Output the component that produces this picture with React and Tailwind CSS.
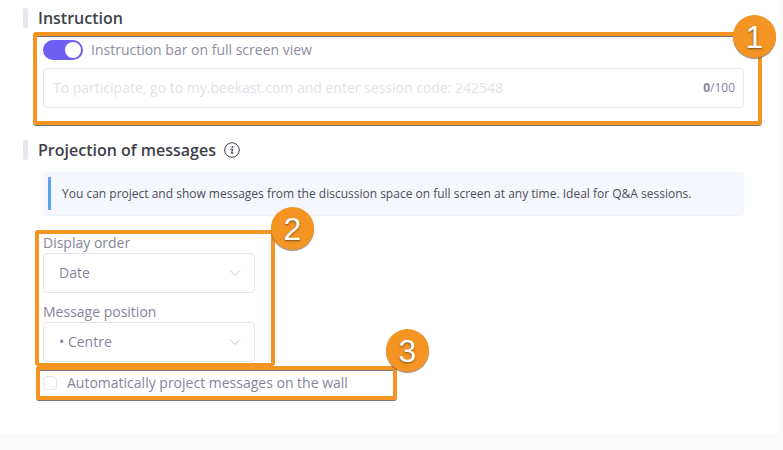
import { ChevronDown } from "lucide-react";

const font = { fontFamily: "'Open Sans', sans-serif" };

/* numbered orange marker sitting on the corner of a highlight box */
function Badge({ n, className }) {
  return (
    <div
      className={`absolute flex h-[43px] w-[43px] items-center justify-center rounded-full bg-[#f39423] text-[32px] leading-none text-white shadow-[0_1px_1px_rgba(60,60,60,0.6)] [text-shadow:0_1px_2px_rgba(90,60,20,0.8)] ${className}`}
      style={{ fontFamily: "'Liberation Sans', sans-serif" }}
    >
      {n}
    </div>
  );
}

function SectionTitle({ children }) {
  return (
    <div className="flex h-5 items-center">
      <div className="h-5 w-[5px] rounded-sm bg-[#e3e6ec]" />
      <h2 className="ml-[10px] text-base font-semibold text-[#3f3f4a]">{children}</h2>
    </div>
  );
}

function Select({ value }) {
  return (
    <div className="flex h-10 w-[212px] shrink-0 items-center justify-between rounded border border-[#e4e4ec] pl-[15px] pr-[9px] text-sm text-[#85859a]">
      <span>{value}</span>
      <ChevronDown className="h-5 w-5 text-[#c3c3d0]" strokeWidth={1.1} />
    </div>
  );
}

export default function App() {
  return (
    <div className="relative flex h-[450px] w-[783px] flex-col overflow-hidden bg-white" style={font}>
      <div className="flex h-[433px] border-r-[3px] border-[#fafafa]">
        <div className="w-full pl-[23px] pt-2">
          <SectionTitle>Instruction</SectionTitle>

          {/* highlight 1 */}
          <div className="relative ml-[10px] mt-1 h-[93px] w-[729px] rounded-[3px] border-4 border-[#f39423] pl-[6px] pt-1 shadow-[0_1px_0_#777,inset_0_1px_0_#777]">
            <div className="flex h-5 items-center">
              <div className="flex h-5 w-10 items-center justify-end rounded-full bg-[#6f5ef0] pr-[2px]">
                <div className="h-4 w-4 rounded-full bg-white" />
              </div>
              <span className="ml-2 text-sm text-[#8d8d9f]">Instruction bar on full screen view</span>
            </div>
            <div className="mt-2 flex h-10 w-[701px] items-center justify-between rounded border border-[#e9e9ef] pl-[9px] pr-2">
              <span className="text-sm text-[#e2e2e9]">To participate, go to my.beekast.com and enter session code: 242548</span>
              <span className="text-xs text-[#85859a]"><b className="font-bold">0</b>/100</span>
            </div>
            <Badge n="1" className="-right-[18px] -top-[21px]" />
          </div>

          <div className="mt-[15px]">
            <SectionTitle>
              <span className="flex items-center gap-2">
                Projection of messages
                <svg viewBox="0 0 16 16" className="h-4 w-4 text-[#3f3f4a]" fill="none" stroke="currentColor">
                  <circle cx="8" cy="8" r="7.3" strokeWidth="1" />
                  <circle cx="8.4" cy="4.9" r="0.9" fill="currentColor" stroke="none" />
                  <path d="M6.8 7.3h1.8l-1 3.6c-.1.5.4.6 1.4-.1" strokeWidth="1.1" strokeLinecap="round" />
                </svg>
              </span>
            </SectionTitle>
          </div>

          <div className="ml-5 mt-3 flex h-11 w-[701px] items-center rounded border-b border-[#eef0f4] bg-[#f4f8fe] pl-[5px]">
            <div className="h-[33px] w-[3px] bg-[#5da3ec]" />
            <p className="ml-[11px] text-xs text-[#4c4c58]">
              You can project and show messages from the discussion space on full screen at any time. Ideal for Q&amp;A sessions.
            </p>
          </div>

          {/* highlight 2 */}
          <div className="relative ml-3 mt-[14px] h-[136px] w-[240px] rounded-[3px] border-x-4 border-t-4 border-b-[3px] border-[#f39423] pl-1">
            <div className="-mt-px text-sm leading-5 text-[#85859a]">Display order</div>
            <Select value="Date" />
            <div className="mt-[9px] text-sm leading-5 text-[#85859a]">Message position</div>
            <Select value="• Centre" />
            <Badge n="2" className="-right-[43px] -top-[27px]" />
          </div>

          {/* highlight 3 */}
          <div className="relative ml-[13px] h-[34px] w-[361px] rounded-[3px] border-4 border-[#f39423] pl-[3px] shadow-[0_1px_0_#777,inset_0_1px_0_#777]">
            <div className="flex h-full items-center">
              <div className="h-[14px] w-[14px] rounded-sm border border-[#e4e4ec]" />
              <span className="ml-[10px] text-sm text-[#85859a]">Automatically project messages on the wall</span>
            </div>
            <Badge n="3" className="-right-[36px] -top-[41px]" />
          </div>
        </div>
      </div>
      <div className="h-[17px] bg-[#fafafa]" />
    </div>
  );
}
